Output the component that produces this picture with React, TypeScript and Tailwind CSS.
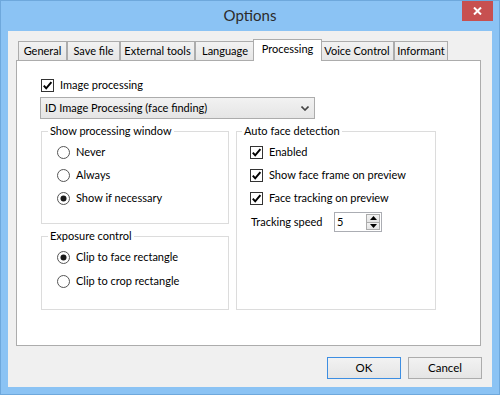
import React from "react";

const font = "font-['Lato','Liberation_Sans',sans-serif]";

function Check({ on }: { on?: boolean }) {
  return (
    <span className="w-[13px] h-[13px] border border-[#333] bg-white flex items-center justify-center shrink-0">
      {on && (
        <svg width="11" height="11" viewBox="0 0 11 11">
          <path d="M1.8 5.6 L4.2 8.3 L9.4 2.2" fill="none" stroke="#000" strokeWidth="2" />
        </svg>
      )}
    </span>
  );
}

function Radio({ on }: { on?: boolean }) {
  return (
    <svg width="13" height="13" viewBox="0 0 13 13" className="shrink-0">
      <circle cx="6.5" cy="6.5" r="6" fill="#fff" stroke="#555" strokeWidth="1" />
      {on && <circle cx="6.5" cy="6.5" r="3" fill="#1a1a1a" />}
    </svg>
  );
}

function Item({ label, children }: { label: string; children: React.ReactNode }) {
  return (
    <div className="h-[16px] flex items-center gap-[6px] whitespace-nowrap">
      {children}
      <span>{label}</span>
    </div>
  );
}

const tabs = [
  { name: "General", w: "w-[49px]" },
  { name: "Save file", w: "w-[53px]" },
  { name: "External tools", w: "w-[75px]" },
  { name: "Language", w: "w-[60px]" },
  { name: "Processing", w: "w-[69px]", active: true },
  { name: "Voice Control", w: "w-[74px]" },
  { name: "Informant", w: "w-[54px]" },
];

export default function App() {
  return (
    <div className={`w-[500px] h-[395px] bg-[#8bc3f4] border border-[#6ea8dc] flex flex-col text-[11px] text-black ${font}`}>
      {/* title bar */}
      <div className="h-[30px] grid grid-cols-[37px_1fr_37px]">
        <div />
        <div className="flex items-center justify-center text-[15px] text-[#2b2b2b] pb-[1px]">Options</div>
        <div className="flex items-start">
          <div className="w-[31px] h-[20px] bg-[#c75050] flex items-center justify-center">
            <svg width="9" height="8" viewBox="0 0 9 8">
              <path d="M1 0.5 L8 7.5 M8 0.5 L1 7.5" stroke="#fff" strokeWidth="2" />
            </svg>
          </div>
        </div>
      </div>

      {/* client */}
      <div className="ml-[7px] w-[484px] h-[356px] bg-[#f0f0f0] flex flex-col">
        <div className="mt-[8px] ml-[10px] h-[21px] flex items-end">
          {tabs.map((t) =>
            t.active ? (
              <div
                key={t.name}
                className={`${t.w} h-[22px] -mx-[2px] -mb-[1px] relative z-10 bg-white border border-b-0 border-[#acacac] flex items-center justify-center pb-[2px]`}
              >
                {t.name}
              </div>
            ) : (
              <div
                key={t.name}
                className={`${t.w} h-[19px] border border-b-0 border-[#acacac] bg-gradient-to-b from-[#f2f2f2] to-[#e6e6e6] flex items-center justify-center whitespace-nowrap`}
              >
                {t.name}
              </div>
            )
          )}
        </div>

        <div className="ml-[8px] w-[465px] h-[286px] bg-white border border-[#acacac] pl-[24px] pt-[18px] flex flex-col">
          <div className="h-[13px] flex items-center gap-[6px]">
            <Check on />
            <span>Image processing</span>
          </div>

          <div className="mt-[5px] -ml-[1px] w-[275px] h-[22px] border border-[#acacac] bg-gradient-to-b from-[#f2f2f2] to-[#e5e5e5] flex items-center pl-[4px] pr-[5px]">
            <span className="flex-1">ID Image Processing (face finding)</span>
            <svg width="8" height="5" viewBox="0 0 8 5">
              <path d="M0.5 0.5 L4 4 L7.5 0.5" fill="none" stroke="#444" strokeWidth="1.6" />
            </svg>
          </div>

          <div className="mt-[5px] flex gap-[7px]">
            <div className="w-[188px] flex flex-col gap-[5px]">
              <fieldset className="border border-[#dcdcdc] p-0 m-0 min-w-0">
                <legend className="ml-[6px] px-[2px] leading-[14px]">Show processing window</legend>
                <div className="pl-[15px] pt-[6px] pb-[17px] flex flex-col gap-[7px]">
                  <Item label="Never"><Radio /></Item>
                  <Item label="Always"><Radio /></Item>
                  <Item label="Show if necessary"><Radio on /></Item>
                </div>
              </fieldset>

              <fieldset className="border border-[#dcdcdc] p-0 m-0 min-w-0">
                <legend className="ml-[6px] px-[2px] leading-[14px]">Exposure control</legend>
                <div className="pl-[15px] pt-[6px] pb-[20px] flex flex-col gap-[8px]">
                  <Item label="Clip to face rectangle"><Radio on /></Item>
                  <Item label="Clip to crop rectangle"><Radio /></Item>
                </div>
              </fieldset>
            </div>

            <fieldset className="w-[200px] border border-[#dcdcdc] p-0 m-0 min-w-0">
              <legend className="ml-[5px] px-[2px] leading-[14px]">Auto face detection</legend>
              <div className="pl-[13px] pt-[6px] flex flex-col gap-[7px]">
                <Item label="Enabled"><Check on /></Item>
                <Item label="Show face frame on preview"><Check on /></Item>
                <Item label="Face tracking on preview"><Check on /></Item>
                <div className="-mt-[1px] ml-[1px] h-[20px] flex items-center">
                  <span className="w-[83px]">Tracking speed</span>
                  <div className="w-[48px] h-[20px] border border-[#abadb3] bg-white flex">
                    <span className="flex-1 pl-[2px] leading-[18px]">5</span>
                    <div className="w-[15px] flex flex-col py-[1px] pr-[1px]">
                      <div className="flex-1 border border-[#acacac] bg-gradient-to-b from-[#f2f2f2] to-[#e5e5e5] flex items-center justify-center">
                        <svg width="7" height="4" viewBox="0 0 7 4"><path d="M0 4 L3.5 0 L7 4 Z" fill="#000" /></svg>
                      </div>
                      <div className="flex-1 border border-t-0 border-[#acacac] bg-gradient-to-b from-[#f2f2f2] to-[#e5e5e5] flex items-center justify-center">
                        <svg width="7" height="4" viewBox="0 0 7 4"><path d="M0 0 L3.5 4 L7 0 Z" fill="#000" /></svg>
                      </div>
                    </div>
                  </div>
                </div>
              </div>
            </fieldset>
          </div>
        </div>

        <div className="mt-[11px] pr-[10px] flex justify-end gap-[7px] text-[11.5px]">
          <button className="w-[74px] h-[22px] border border-[#3d8ee2] bg-gradient-to-b from-[#f2f2f2] to-[#e5e5e5] flex items-center justify-center">
            OK
          </button>
          <button className="w-[74px] h-[22px] border border-[#acacac] bg-gradient-to-b from-[#f2f2f2] to-[#e5e5e5] flex items-center justify-center">
            Cancel
          </button>
        </div>
      </div>
    </div>
  );
}
